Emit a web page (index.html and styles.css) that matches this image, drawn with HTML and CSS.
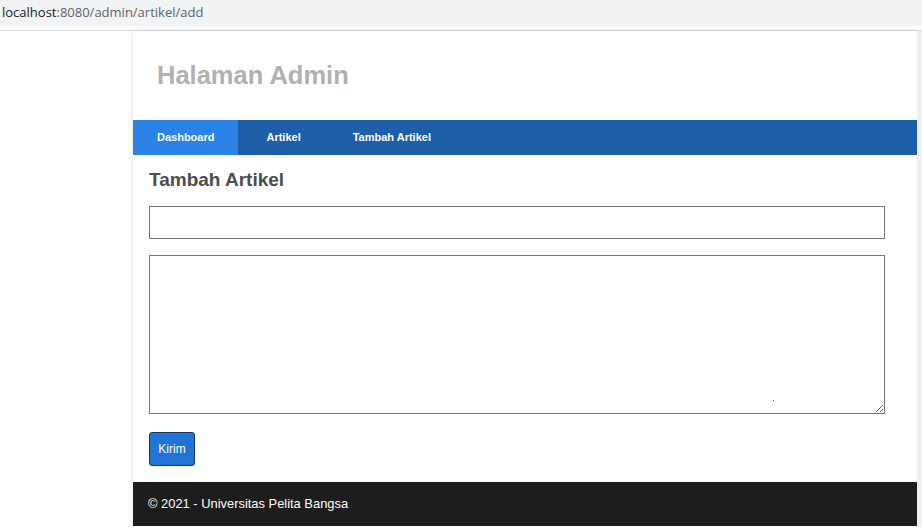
FILE: index.html
```html
<!DOCTYPE html>
<html>
<head>
<meta charset="utf-8">
<link rel="stylesheet" href="styles.css">
</head>
<body>
<div class="chrome">
  <div class="urlbar"><span class="host">localhost</span><span class="path">:8080/admin/artikel/add</span></div>
  <div class="chrome-gap"></div>
</div>
<div class="viewport">
  <div class="page">
    <header class="header">
      <h1>Halaman Admin</h1>
    </header>
    <nav class="nav">
      <a class="nav-item active">Dashboard</a>
      <a class="nav-item">Artikel</a>
      <a class="nav-item">Tambah Artikel</a>
    </nav>
    <section class="content">
      <h2>Tambah Artikel</h2>
      <form class="form">
        <input class="field" type="text">
        <div class="area-wrap">
          <textarea class="area"></textarea>
          <span class="dot"></span>
        </div>
        <button class="btn" type="button">Kirim</button>
      </form>
    </section>
    <footer class="footer">© 2021 - Universitas Pelita Bangsa</footer>
  </div>
  <div class="scroll"></div>
</div>
</body>
</html>
```
FILE: styles.css
```css
html, body {
  margin: 0;
  padding: 0;
  background: #fff;
  font-family: "Liberation Sans", Arial, sans-serif;
  width: 922px;
  height: 527px;
  overflow: hidden;
}
.chrome {
  height: 31px;
  display: flex;
  flex-direction: column;
}
.urlbar {
  height: 26px;
  background: #f1f3f4;
  font-family: "Open Sans", "Noto Sans", sans-serif;
  font-size: 13px;
  line-height: 25px;
  padding-left: 2px;
  box-sizing: border-box;
}
.host { color: #202124; }
.path { color: #5f6368; }
.chrome-gap {
  flex: 1;
  border-bottom: 1px solid #dadce0;
}
.viewport {
  display: flex;
  height: 496px;
}
.page {
  margin-left: 133px;
  width: 784px;
  background: #fff;
  box-shadow: 0 0 6px rgba(0,0,0,0.12);
  display: flex;
  flex-direction: column;
}
.scroll {
  width: 5px;
  background: #f0f0f0;
}
.header {
  height: 89px;
  padding-left: 24px;
  box-sizing: border-box;
}
.header h1 {
  margin: 0;
  padding-top: 30px;
  font-size: 25.5px;
  line-height: 28px;
  color: #b1b1b1;
  font-weight: bold;
}
.nav {
  height: 35px;
  background: #1f5ea8;
  display: flex;
  gap: 4px;
}
.nav-item {
  padding: 0 24px;
  line-height: 35px;
  font-size: 11px;
  font-weight: bold;
  color: #fff;
}
.nav-item.active {
  background: #2b83e8;
}
.content {
  padding: 15px 16px 16px 16px;
}
.content h2 {
  margin: 0;
  font-size: 19px;
  line-height: 20px;
  color: #4d4d4d;
  font-weight: bold;
}
.form {
  display: flex;
  flex-direction: column;
  align-items: flex-start;
  gap: 16px;
  margin-top: 16px;
}
.field {
  width: 736px;
  height: 33px;
  box-sizing: border-box;
  border: 1px solid #767676;
  margin: 0;
}
.area-wrap {
  position: relative;
  width: 736px;
}
.area {
  display: block;
  width: 736px;
  height: 159px;
  box-sizing: border-box;
  border: 1px solid #767676;
  margin: 0;
  resize: both;
}
.dot {
  position: absolute;
  left: 624px;
  top: 145px;
  width: 1px;
  height: 1px;
  background: #e02020;
}
.btn {
  display: block;
  margin-top: 2px;
  width: 46px;
  height: 34px;
  background: #1f74d6;
  border: 1px solid #1c3a5e;
  border-radius: 3px;
  color: #fff;
  font-family: "Liberation Sans", Arial, sans-serif;
  font-size: 12px;
  padding: 0;
}
.footer {
  height: 44px;
  background: #1d1d1d;
  color: #fff;
  font-size: 12.9px;
  line-height: 43px;
  padding-left: 15px;
}
```
